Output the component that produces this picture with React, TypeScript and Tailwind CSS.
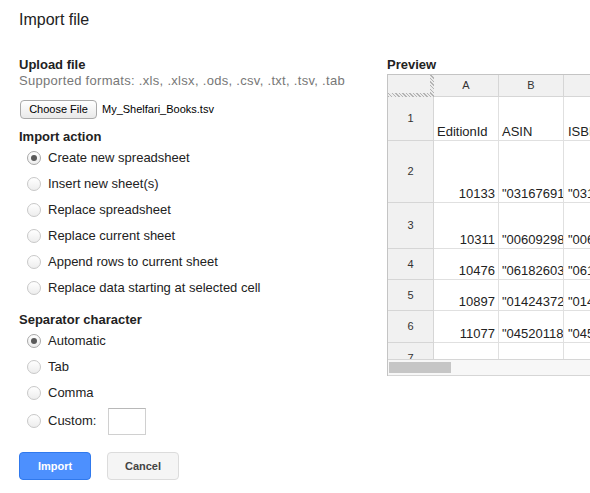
import React from "react";

interface RowData {
    n: number;
    h: string;
    a: string;
    b: string;
    c: string;
    head?: boolean;
}

const rows: RowData[] = [
    { n: 1, h: "h-[44px]", a: "EditionId", b: "ASIN", c: "ISBN", head: true },
    { n: 2, h: "h-[62px]", a: "10133", b: '"0316769177"', c: '"0316769177"' },
    { n: 3, h: "h-[46px]", a: "10311", b: '"0060929871"', c: '"0060929871"' },
    { n: 4, h: "h-[31px]", a: "10476", b: '"0618260307"', c: '"0618260307"' },
    { n: 5, h: "h-[31px]", a: "10897", b: '"0142437204"', c: '"0142437204"' },
    { n: 6, h: "h-[32px]", a: "11077", b: '"0452011876"', c: '"0452011876"' },
    { n: 7, h: "h-[31px]", a: "", b: "", c: "" },
];

const actions = [
    "Create new spreadsheet",
    "Insert new sheet(s)",
    "Replace spreadsheet",
    "Replace current sheet",
    "Append rows to current sheet",
    "Replace data starting at selected cell",
];

const hatch =
    "bg-[repeating-linear-gradient(45deg,#b4b4b4_0px,#b4b4b4_1px,#ececec_1px,#ececec_2.5px)]";

const Radio: React.FC<{ checked?: boolean }> = ({ checked }) => (
    <span
        className={`flex h-[14px] w-[14px] shrink-0 items-center justify-center rounded-full border bg-gradient-to-b from-white to-[#ededed] ${
            checked ? "border-[#a8a8a8]" : "border-[#c8c8c8]"
        }`}
    >
        {checked && <span className="h-[6px] w-[6px] rounded-full bg-[#5a5a5a]" />}
    </span>
);

const RadioRow: React.FC<{ label: string; checked?: boolean; children?: React.ReactNode; tall?: boolean }> = ({
    label,
    checked,
    children,
    tall,
}) => (
    <div className={`flex items-center pl-2 ${tall ? "h-[30px]" : "h-[26px]"}`}>
        <Radio checked={checked} />
        <span className="ml-[7px] text-[13px] leading-4 text-[#222]">{label}</span>
        {children}
    </div>
);

const PreviewGrid: React.FC = () => (
    <div className="w-[320px] border-l border-t border-[#c4c4c4] text-[#222]">
        <div className="h-[284px] overflow-hidden">
            {/* column headers */}
            <div className="flex h-[22px] bg-[#f1f1f1]">
                {/* frozen corner with hatched handles */}
                <div className="flex w-[46px] shrink-0 flex-col">
                    <div className="flex flex-1">
                        <div className="flex-1" />
                        <div className={`w-[4px] ${hatch}`} />
                    </div>
                    <div className={`h-[4px] ${hatch}`} />
                </div>
                {["A", "B", "C", "D"].map((col) => (
                    <div
                        key={col}
                        className="flex w-[65px] shrink-0 items-center justify-center border-b border-r border-[#d6d6d6] text-[11px] text-[#333]"
                    >
                        {col}
                    </div>
                ))}
            </div>

            {rows.map((r) => (
                <div key={r.n} className={`flex ${r.h}`}>
                    <div className="flex w-[46px] shrink-0 items-center justify-center border-b border-r border-[#d6d6d6] bg-[#f1f1f1] text-[11px] text-[#333]">
                        {r.n}
                    </div>
                    <div
                        className={`flex w-[65px] shrink-0 items-end overflow-hidden whitespace-nowrap border-b border-r border-[#e0e0e0] text-[13px] leading-4 ${
                            r.head ? "pl-[3px]" : "justify-end pr-[3px]"
                        }`}
                    >
                        {r.a}
                    </div>
                    <div className="flex w-[65px] shrink-0 items-end overflow-hidden whitespace-nowrap border-b border-r border-[#e0e0e0] pl-[3px] text-[13px] leading-4">
                        {r.b}
                    </div>
                    <div className="flex w-[65px] shrink-0 items-end overflow-hidden whitespace-nowrap border-b border-r border-[#e0e0e0] pl-[4px] text-[13px] leading-4">
                        {r.c}
                    </div>
                    <div className="w-[65px] shrink-0 border-b border-r border-[#e0e0e0]" />
                </div>
            ))}
        </div>

        {/* horizontal scrollbar */}
        <div className="h-[17px] border-b border-t border-[#d6d6d6] bg-[#f7f7f7] px-px py-[2px]">
            <div className="h-[11px] w-[62px] bg-[#c6c6c6]" />
        </div>
    </div>
);

export default function App() {
    return (
        <div className="h-[493px] w-[590px] overflow-hidden bg-white font-['Liberation_Sans',Arial,sans-serif] text-[#222]">
            <h1 className="pl-[19px] pt-[10px] text-[16px] font-normal leading-5 text-[#222]">Import file</h1>

            <div className="mt-[27px] flex">
                {/* --- Left column --- */}
                <div className="w-[387px] shrink-0 pl-[19px]">
                    <h2 className="text-[13px] font-bold leading-4">Upload file</h2>
                    <p className="whitespace-nowrap text-[13px] leading-4 tracking-[0.3px] text-[#777]">
                        Supported formats: .xls, .xlsx, .ods, .csv, .txt, .tsv, .tab
                    </p>

                    <div className="mt-[11px] flex h-[19px] items-center">
                        <button
                            type="button"
                            className="ml-px h-[19px] w-[77px] rounded-[4px] border border-[#a9a9a9] bg-gradient-to-b from-white to-[#e9e9e9] text-[11px] leading-none text-black"
                        >
                            Choose File
                        </button>
                        <span className="ml-[5px] text-[11px] text-black">My_Shelfari_Books.tsv</span>
                    </div>

                    <h2 className="mt-[10px] text-[13px] font-bold leading-4">Import action</h2>
                    <div>
                        {actions.map((a, i) => (
                            <RadioRow key={a} label={a} checked={i === 0} />
                        ))}
                    </div>

                    <h2 className="mt-[11px] text-[13px] font-bold leading-4">Separator character</h2>
                    <div>
                        <RadioRow label="Automatic" checked />
                        <RadioRow label="Tab" />
                        <RadioRow label="Comma" />
                        <RadioRow label="Custom:" tall>
                            <input
                                type="text"
                                className="ml-3 h-[27px] w-[38px] border border-[#d0d0d0] border-t-[#b8b8b8] bg-white outline-none"
                            />
                        </RadioRow>
                    </div>

                    <div className="mt-4 flex gap-4">
                        <button
                            type="button"
                            className="h-[28px] w-[72px] rounded-sm border border-[#3079ed] bg-[#4d90fe] text-[11px] font-bold text-white"
                        >
                            Import
                        </button>
                        <button
                            type="button"
                            className="h-[28px] w-[72px] rounded-sm border border-[#dcdcdc] bg-[#f5f5f5] text-[11px] font-bold text-[#444]"
                        >
                            Cancel
                        </button>
                    </div>
                </div>

                {/* --- Preview --- */}
                <div className="min-w-0 flex-1">
                    <h2 className="text-[13px] font-bold leading-4">Preview</h2>
                    <div className="mt-px">
                        <PreviewGrid />
                    </div>
                </div>
            </div>
        </div>
    );
}
